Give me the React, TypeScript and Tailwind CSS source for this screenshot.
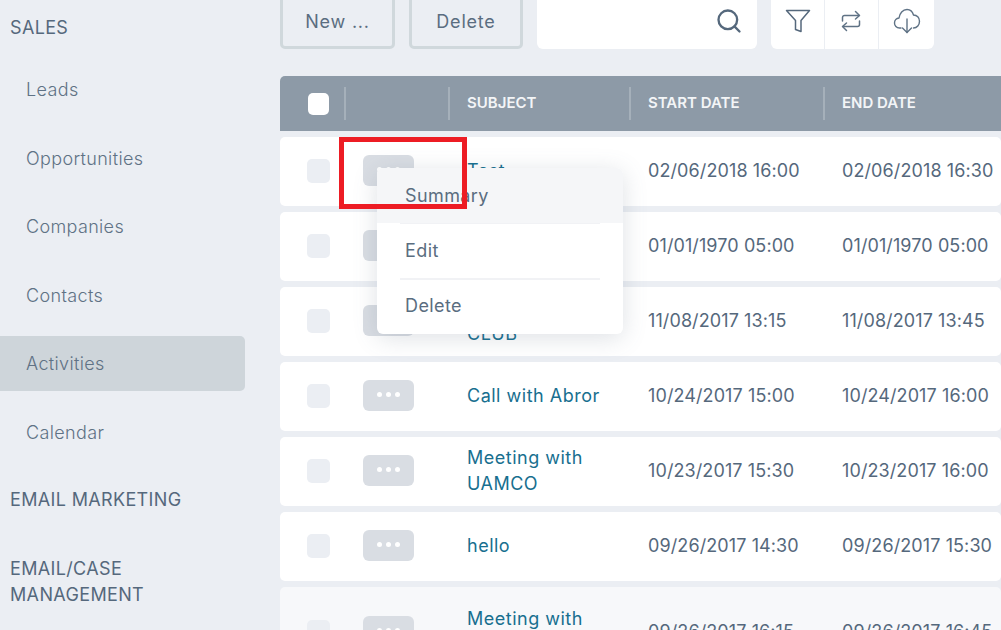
import React from "react";
import { Search } from "lucide-react";

const font = { fontFamily: "Inter, 'Open Sans', sans-serif" };

type Row = { subject: string[]; start: string; end: string; tall?: boolean };

const rows: Row[] = [
  { subject: ["Test"], start: "02/06/2018 16:00", end: "02/06/2018 16:30" },
  { subject: ["Test"], start: "01/01/1970 05:00", end: "01/01/1970 05:00" },
  { subject: ["Meeting at", "CLUB"], start: "11/08/2017 13:15", end: "11/08/2017 13:45" },
  { subject: ["Call with Abror"], start: "10/24/2017 15:00", end: "10/24/2017 16:00" },
  { subject: ["Meeting with", "UAMCO"], start: "10/23/2017 15:30", end: "10/23/2017 16:00" },
  { subject: ["hello"], start: "09/26/2017 14:30", end: "09/26/2017 15:30" },
  { subject: ["Meeting with", "UAMCO"], start: "09/26/2017 16:15", end: "09/26/2017 16:45", tall: true },
];

const gridCols = "grid grid-cols-[65px_104px_181px_194px_1fr] items-center";

function SectionLabel({ children, className }: { children: React.ReactNode; className: string }) {
  return (
    <div className={`flex shrink-0 items-center pt-[2px] pl-[10px] text-[18px] leading-[26px] font-normal tracking-[0.35px] text-[#55687c] ${className}`}>
      <span>{children}</span>
    </div>
  );
}

function NavItem({ label, active }: { label: string; active?: boolean }) {
  return (
    <div
      className={`flex h-[55px] shrink-0 items-center rounded-r-[5px] pl-[26px] text-[18px] font-light tracking-[0.35px] text-[#5f7285] ${
        active ? "bg-[#ced5da]" : ""
      }`}
    >
      {label}
    </div>
  );
}

function Sidebar() {
  return (
    <aside className="flex w-[245px] shrink-0 flex-col gap-[13.5px] pt-[5.5px]">
      <SectionLabel className="h-[43px]">SALES</SectionLabel>
      <NavItem label="Leads" />
      <NavItem label="Opportunities" />
      <NavItem label="Companies" />
      <NavItem label="Contacts" />
      <NavItem label="Activities" active />
      <NavItem label="Calendar" />
      <SectionLabel className="h-[52px]">EMAIL MARKETING</SectionLabel>
      <SectionLabel className="h-[85px]">
        EMAIL/CASE
        <br />
        MANAGEMENT
      </SectionLabel>
    </aside>
  );
}

function Toolbar() {
  const btn =
    "flex h-full items-center justify-center rounded-[5px] border-[3px] border-[#d0d8dc] pt-[3px] text-[18px] tracking-[0.8px] text-[#5a6d80]";
  return (
    <div className="-mt-[10px] flex h-[59px] shrink-0 gap-[14px]">
      <button className={`${btn} w-[115px]`}>New ...</button>
      <button className={`${btn} w-[114px]`}>Delete</button>
      <div className="flex w-[220px] items-center justify-end rounded-[6px] bg-white pt-[3px] pr-[14px]">
        <Search size={28} strokeWidth={2} className="text-[#55687c]" />
      </div>
      <div className="flex w-[163px] divide-x divide-[#ebeef3] rounded-[6px] bg-white">
        <div className="flex w-[54px] items-center justify-center pt-[3px]">
          <svg width="26" height="24" viewBox="0 0 26 24" fill="none" stroke="#55687c" strokeWidth="1.5" strokeLinejoin="round">
            <path d="M1.5 1.5H24.5L16 11.5V22.5L10.5 20.5V11.5Z" />
          </svg>
        </div>
        <div className="flex w-[54px] items-center justify-center pt-[3px] pr-[2px]">
          <svg width="20" height="22" viewBox="0 0 20 22" fill="none" stroke="#5f7285" strokeWidth="1.5" strokeLinecap="round" strokeLinejoin="round">
            <path d="M1.5 11V7.5C1.5 6.4 2.4 5.5 3.5 5.5H18" />
            <path d="M14.5 1.5L18.5 5.5L14.5 9" />
            <path d="M18.5 11V14.5C18.5 15.6 17.6 16.5 16.5 16.5H2" />
            <path d="M5.5 13L1.5 16.5L5.5 20.5" />
          </svg>
        </div>
        <div className="flex flex-1 items-center justify-center pt-[3px]">
          <svg width="28" height="26" viewBox="0 0 28 26" fill="none" stroke="#5f7285" strokeWidth="1.4" strokeLinecap="round" strokeLinejoin="round">
            <path d="M8 20H6.5C3.5 20 1.5 17.7 1.5 15C1.5 12.2 3.6 10.2 6 10C6.6 5.2 9.8 1.5 14 1.5C17.3 1.5 19.6 3.8 20.5 7C24 7 26.5 9.8 26.5 13.2C26.5 16.8 24 20 20.5 20" />
            <path d="M14 11V24.5" />
            <path d="M9.5 20L14 24.5L18.5 20" />
          </svg>
        </div>
      </div>
    </div>
  );
}

function HeaderCell({ label }: { label?: string }) {
  return (
    <div className="-ml-[1px] flex h-[33px] items-center border-l-2 border-[#a5b0ba] pl-[17px] text-[15px] font-semibold text-[#f3f5f7]">
      {label}
    </div>
  );
}

function TableRow({ row }: { row: Row }) {
  return (
    <div className={`${gridCols} shrink-0 rounded-[5px] pb-[2px] ${row.tall ? "h-[90px] bg-[#f7f8fa]" : "h-[69px] bg-white"}`}>
      <div className="pt-[1px] pl-[27px]">
        <div className="h-[24px] w-[23px] rounded-[5px] bg-[#ebeef3]" />
      </div>
      <div className="pl-[18px]">
        <div className="flex h-[31px] w-[51px] items-center justify-center gap-[4px] rounded-[6px] bg-[#d9dde3] pb-[2px]">
          <span className="size-[5px] rounded-full bg-white" />
          <span className="size-[5px] rounded-full bg-white" />
          <span className="size-[5px] rounded-full bg-white" />
        </div>
      </div>
      <div className="pt-[1px] pl-[18px] text-[18px] leading-[26px] tracking-[0.5px] text-[#186f8f]">
        {row.subject.map((line) => (
          <div key={line}>{line}</div>
        ))}
      </div>
      <div className="pl-[18px] text-[18px] tracking-[0.1px] whitespace-nowrap text-[#55687c]">{row.start}</div>
      <div className="pl-[18px] text-[18px] tracking-[0.1px] whitespace-nowrap text-[#55687c]">{row.end}</div>
    </div>
  );
}

function ActionMenu() {
  return (
    <div className="absolute top-[168px] left-[377px] z-10 w-[246px] rounded-[6px] bg-white text-[18px] tracking-[0.4px] text-[#5a6d80] shadow-[0_4px_24px_rgba(90,105,125,0.2)]">
      <div className="flex h-[55px] items-center rounded-t-[6px] bg-[#f5f6f8] pl-[28px]">Summary</div>
      <div className="mx-[23px] flex h-[55px] items-center border-t border-[#f1f2f5] pb-[2px] pl-[5px]">Edit</div>
      <div className="mx-[23px] flex h-[56px] items-center border-t-2 border-[#f1f2f5] pb-[4px] pl-[5px]">Delete</div>
    </div>
  );
}

export default function App(): React.JSX.Element {
  return (
    <div className="relative flex h-[630px] w-[1001px] overflow-hidden bg-[#ebeef3]" style={font}>
      <Sidebar />

      <main className="ml-[35px] flex min-w-0 flex-1 flex-col">
        <Toolbar />

        {/* Table */}
        <div className={`${gridCols} mt-[27px] h-[55px] shrink-0 rounded-tl-[5px] bg-[#8d9aa7]`}>
          <div className="relative flex h-[33px] items-center pl-[28px]">
            <div className="h-[22px] w-[21px] rounded-[5px] bg-white" />
          </div>
          <HeaderCell />
          <HeaderCell label="SUBJECT" />
          <HeaderCell label="START DATE" />
          <HeaderCell label="END DATE" />
        </div>
        <div className="mt-[6px] flex flex-col gap-[6px]">
          {rows.map((row) => (
            <TableRow key={row.start} row={row} />
          ))}
        </div>
      </main>

      <ActionMenu />

      {/* Red annotation box */}
      <div className="absolute top-[137px] left-[339px] z-20 h-[72px] w-[128px] border-[5px] border-[#ed1c24]" />
    </div>
  );
}
